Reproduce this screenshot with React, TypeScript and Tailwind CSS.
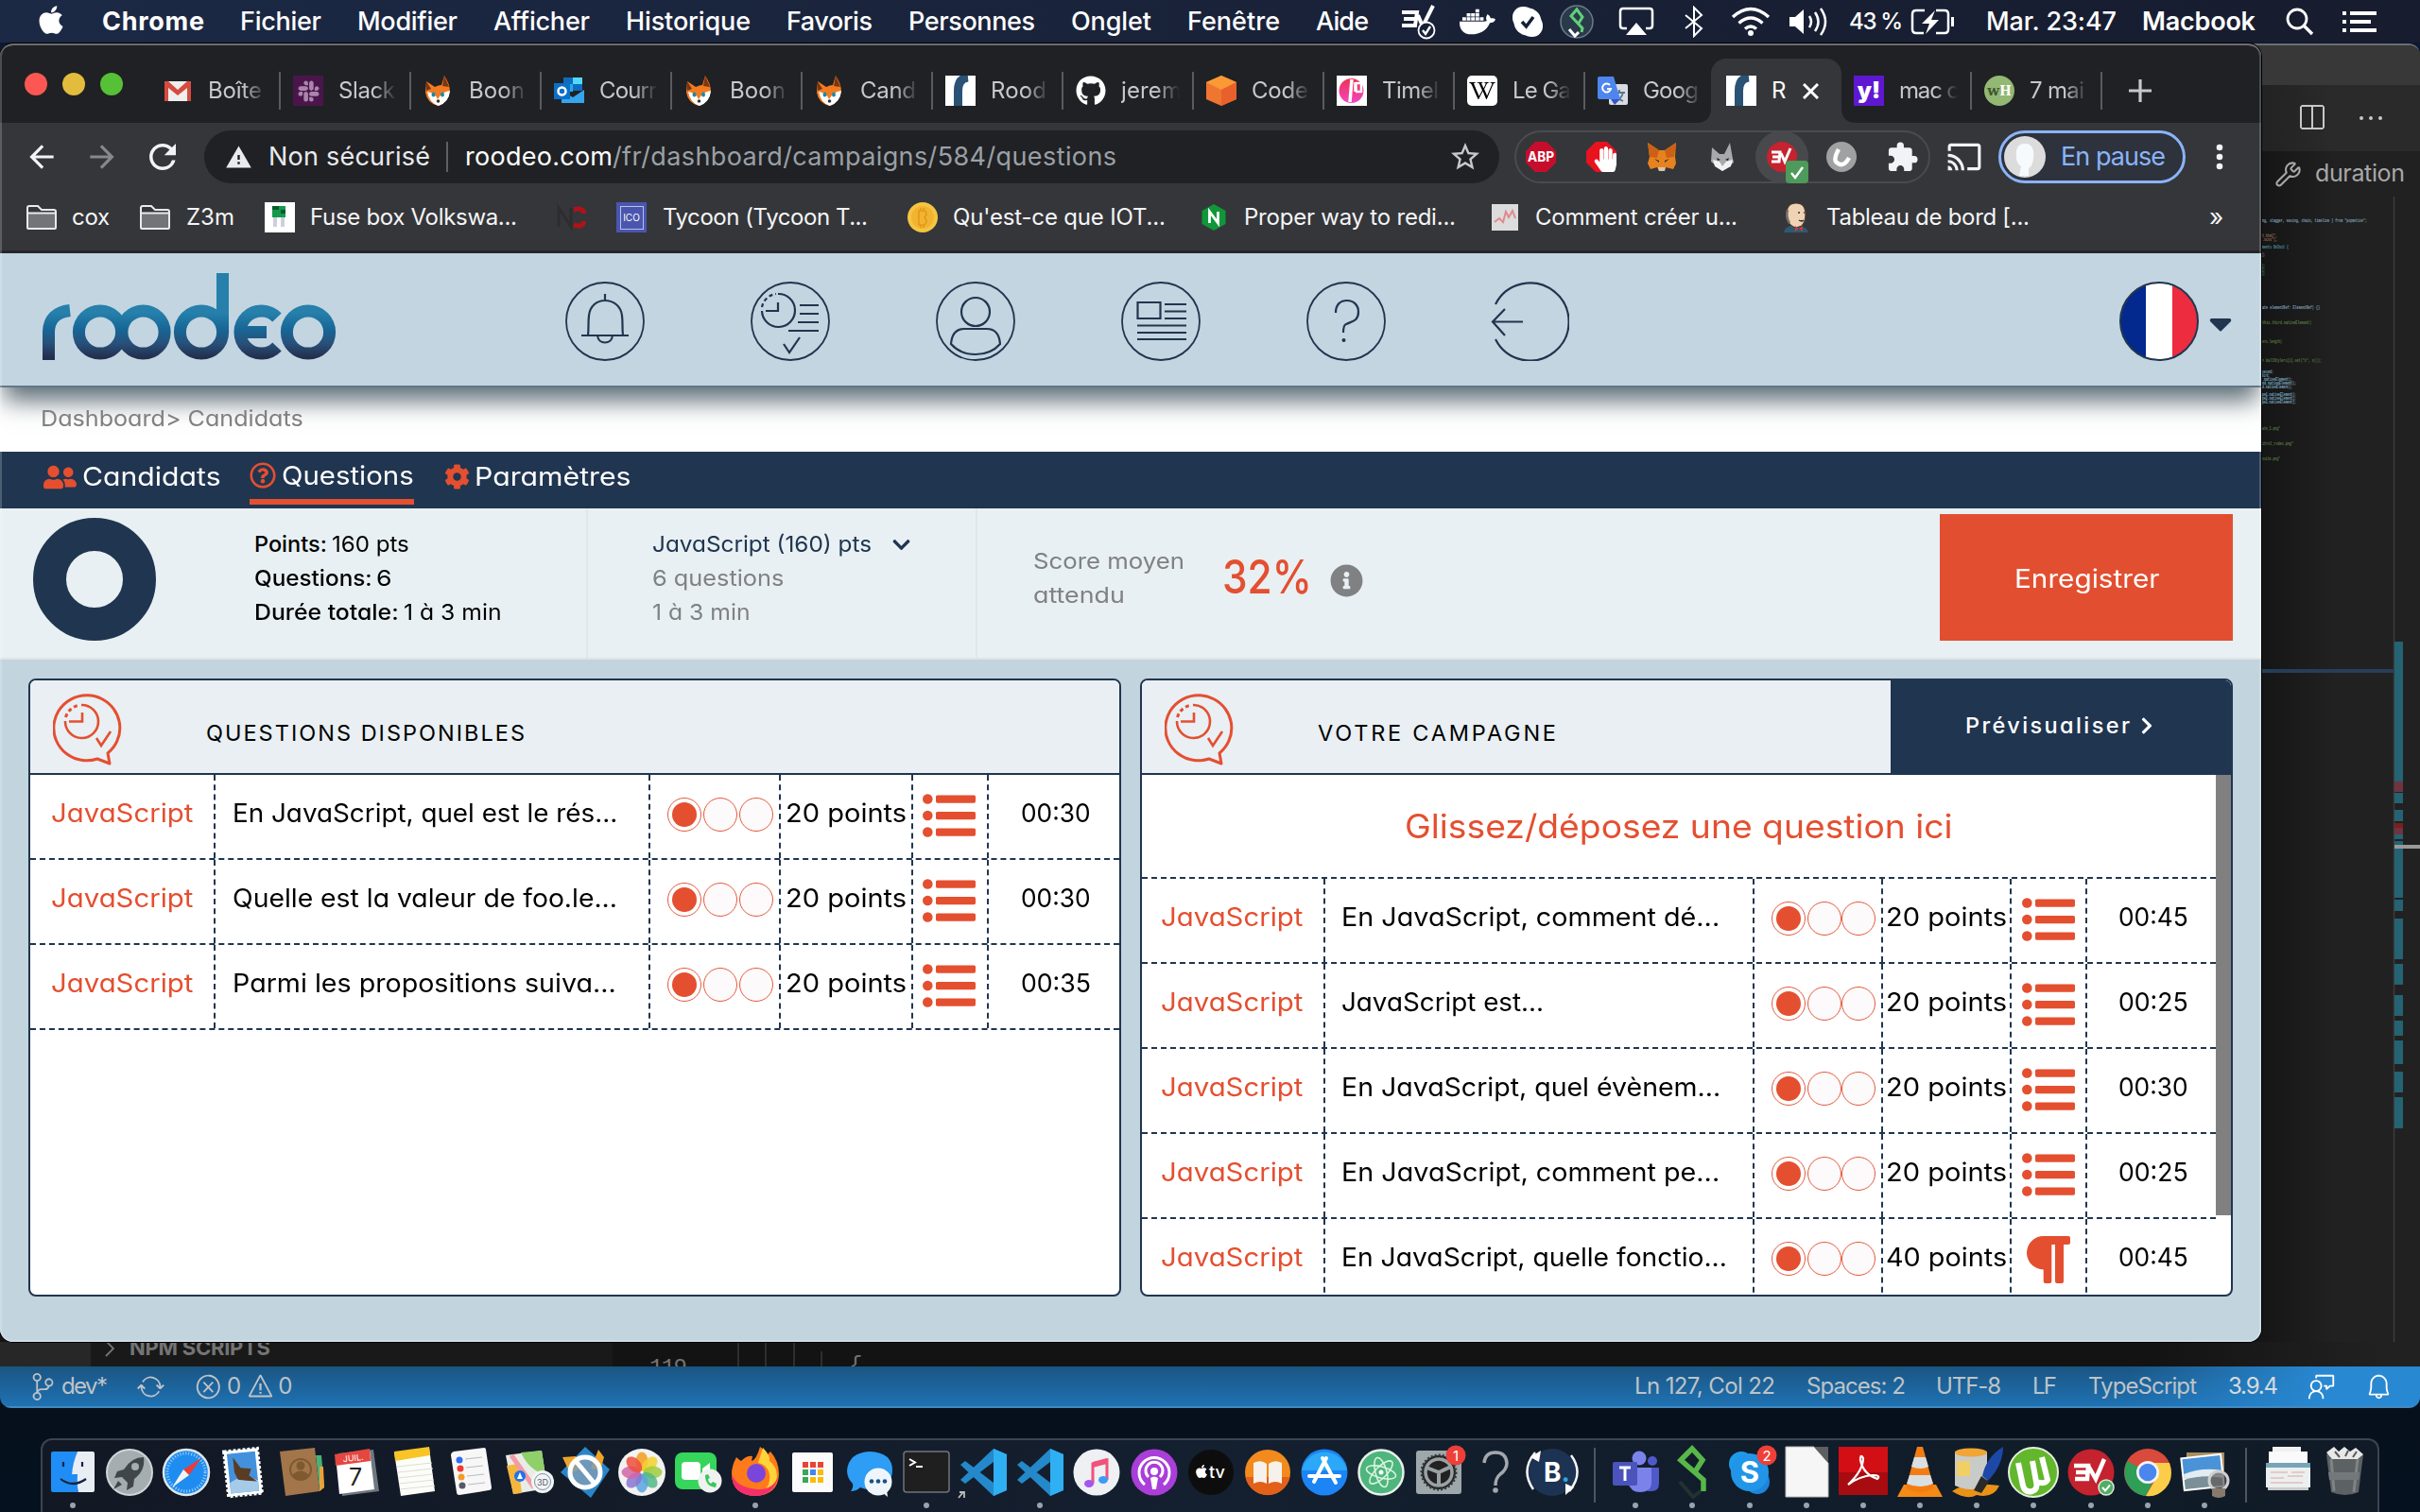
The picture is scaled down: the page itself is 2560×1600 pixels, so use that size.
import React, { useLayoutEffect, useRef } from "react";
import {
  FaApple, FaCog, FaChevronDown, FaChevronRight, FaDocker, FaGithub, FaHandPaper, FaInfoCircle,
  FaPuzzlePiece, FaRegQuestionCircle, FaSlack, FaUserFriends, FaWikipediaW,
} from "react-icons/fa";
import { MdArrowBack, MdArrowForward, MdCast, MdExtension, MdRefresh, MdStarBorder, MdWarning } from "react-icons/md";
import { VscBell, VscError, VscFeedback, VscSourceControl, VscSplitHorizontal, VscSync, VscWarning } from "react-icons/vsc";
import { Wrench } from "lucide-react";

/** Single-line text tracked so that it fills exactly `w` pixels. */
function Fit({ w, className = "", children }: { w: number; className?: string; children: React.ReactNode }) {
  const ref = useRef<HTMLSpanElement>(null);
  useLayoutEffect(() => {
    const el = ref.current;
    if (!el) return;
    el.style.letterSpacing = "0px";
    const n = (el.textContent || "").length;
    const natural = el.getBoundingClientRect().width;
    el.style.letterSpacing = `${(w - natural) / Math.max(1, n - 1)}px`;
  }, [w]);
  return (
    <span className={"block shrink-0 whitespace-pre " + className} style={{ width: w }}>
      <span ref={ref} className="inline-block">{children}</span>
    </span>
  );
}

/** Single-line text whose letters are widened or narrowed to fill exactly `w` pixels. */
function Wide({ w, className = "", children }: { w: number; className?: string; children: React.ReactNode }) {
  const ref = useRef<HTMLSpanElement>(null);
  useLayoutEffect(() => {
    const el = ref.current;
    if (!el) return;
    el.style.transform = `scaleX(${w / el.offsetWidth})`;
  }, [w]);
  return (
    <span className={"block shrink-0 whitespace-pre " + className} style={{ width: w }}>
      <span ref={ref} className="inline-block origin-left">{children}</span>
    </span>
  );
}

/* ---------------------------------------------------------------- menu bar */

const menus: [string, number][] = [
  ["Fichier", 86], ["Modifier", 106], ["Afficher", 102], ["Historique", 132], ["Favoris", 91],
  ["Personnes", 134], ["Onglet", 85], ["Fenêtre", 98], ["Aide", 56],
];

function MenuBar() {
  return (
    <div className="flex h-[45px] items-center bg-gradient-to-r from-[#1b2945] to-[#171c2e] text-[27px] leading-[44px] font-medium text-white">
      <FaApple className="ml-[37px] size-[34px] -translate-y-[2px]" />
      <div className="ml-[37px] flex gap-[38px]">
        <Fit w={108} className="font-bold">Chrome</Fit>
        {menus.map(([t, w]) => <Fit key={t} w={w}>{t}</Fit>)}
      </div>
      <svg className="ml-[34px] h-[38px] w-[38px]" viewBox="0 0 38 38" fill="none" stroke="#fff" strokeWidth="4">
        <path d="M1 9h16l-2 14H1M3 16h12M18 12l5 12L34 2" />
        <circle cx="27" cy="28" r="8.5" fill="#182036" strokeWidth="1.8" />
        <path d="M23 28l3 4 5-8" strokeWidth="2.4" />
      </svg>
      <FaDocker className="ml-[24px] size-[38px]" />
      <svg className="ml-[17px] h-[34px] w-[34px]" viewBox="0 0 34 34">
        <rect x="1" y="1" width="23" height="23" rx="11" fill="#fff" />
        <rect x="10" y="10" width="23" height="23" rx="11" fill="#fff" />
        <circle cx="17" cy="17" r="14.5" fill="#fff" />
        <path d="M11 17l4.500 5 7.500-10" fill="none" stroke="#182036" strokeWidth="3.500" />
      </svg>
      <svg className="ml-[17px] h-[36px] w-[36px]" viewBox="0 0 36 36" fill="none" strokeWidth="3">
        <circle cx="18" cy="18" r="17" fill="#2b3a4a" stroke="#6d7a88" strokeWidth="1.500" />
        <path d="M19 21l5-8-6-8-6 7 12 13-1 4" stroke="#5fd07a" />
        <path d="M10 26l6 7 4-4" stroke="#fff" />
      </svg>
      <svg className="ml-[26px] h-[32px] w-[38px]" viewBox="0 0 38 32" fill="none" stroke="#fff" strokeWidth="2.500">
        <path d="M9 23H5q-3 0-3-3V5q0-3 3-3h28q3 0 3 3v15q0 3-3 3h-4" />
        <path d="M19 17L8 30h22z" fill="#fff" stroke="none" />
      </svg>
      <svg className="ml-[31px] h-[34px] w-[22px]" viewBox="0 0 22 34" fill="none" stroke="#fff" strokeWidth="2">
        <path d="M2 10l17 14-8 8V2l8 8L2 24" />
      </svg>
      <svg className="ml-[28px] h-[32px] w-[42px]" viewBox="0 0 42 32" fill="none" stroke="#fff" strokeWidth="3.400">
        <path d="M2 11q19-17 38 0M8.500 17.500q12.500-11 25 0M15 23.500q6-5 12 0" />
        <circle cx="21" cy="28" r="3" fill="#fff" stroke="none" />
      </svg>
      <svg className="ml-[19px] h-[32px] w-[44px]" viewBox="0 0 44 32" fill="none" stroke="#fff" strokeWidth="2.500">
        <path d="M1 11h6l9-8v26l-9-8H1z" fill="#fff" stroke="none" />
        <path d="M22 10q4 6 0 12M28 6q7 10 0 20M34 2q10 14 0 28" />
      </svg>
      <Fit w={57} className="ml-[20px] text-[24px]">43 %</Fit>
      <svg className="ml-[8px] h-[28px] w-[48px]" viewBox="0 0 48 28" fill="none" stroke="#fff" strokeWidth="2.500">
        <path d="M15 2H6Q2 2 2 6v16q0 4 4 4h8M27 2h9q4 0 4 4v16q0 4-4 4h-9" />
        <path d="M26 2L12 16h8l-4 11 14-15h-8z" fill="#fff" stroke="none" />
        <path d="M44.500 9v10" strokeWidth="3" />
      </svg>
      <Fit w={138} className="ml-[32px]">Mar. 23:47</Fit>
      <Fit w={120} className="ml-[27px] font-semibold">Macbook</Fit>
      <svg className="ml-[32px] h-[30px] w-[30px]" viewBox="0 0 30 30" fill="none" stroke="#fff" strokeWidth="2.800">
        <circle cx="12" cy="12" r="10" /><path d="M19 19l9 9" strokeWidth="3.400" />
      </svg>
      <svg className="ml-[30px] h-[22px] w-[36px]" viewBox="0 0 36 22" fill="#fff">
        <path d="M0 0h4v4H0zM8 0h28v4H8zM0 9h4v4H0zM8 9h22v4H8zM0 18h4v4H0zM8 18h28v4H8z" />
      </svg>
    </div>
  );
}

/* ------------------------------------------------------------ small logos */

function FoxHead() {
  return (
    <svg className="size-8" viewBox="0 0 32 32">
      <path d="M3 6l9 6q4-2 7-2l3-10q6 9 6 17-2 12-13 15Q4 29 2 18z" fill="#f27b21" />
      <path d="M22 0l5 12-7-1zM3 6l5 8-5 2z" fill="#7a3514" />
      <path d="M4 17q8 1 11 8 4-8 13-9-1 12-12 16Q6 29 4 17z" fill="#fff" />
      <ellipse cx="10.500" cy="20" rx="2" ry="2.600" fill="#1e88a8" /><ellipse cx="20" cy="20" rx="2" ry="2.600" fill="#1e88a8" />
      <circle cx="15.500" cy="27" r="1.800" fill="#333" />
    </svg>
  );
}
const RoodeoMark = () => (
  <svg className="size-8" viewBox="0 0 32 32"><rect width="32" height="32" fill="#fff" /><path d="M13.500 32V16Q13.500 3 24 2" fill="none" stroke="#2a5275" strokeWidth="9" /></svg>
);
const Gmail = () => (
  <svg className="size-8" viewBox="0 0 32 32"><rect x="2" y="6" width="28" height="21" rx="2" fill="#eee" /><path d="M2 27V8q1-3 4-2l10 9 10-9q3-1 4 2v19h-4V13l-10 8L6 13v14z" fill="#d54b3d" /></svg>
);
const Outlook = () => (
  <svg className="size-8" viewBox="0 0 32 32"><path d="M10 2h20v14H10z" fill="#0f6cbd" /><path d="M20 2h10v7H20z" fill="#50d9ff" /><path d="M10 9h10v8H10z" fill="#28a8ea" /><path d="M8 29V16l12 7 12-8v14z" fill="#35a5ee" /><path d="M0 8h17v17H0z" fill="#0a6fc9" /><circle cx="8.500" cy="16.500" r="4" fill="none" stroke="#fff" strokeWidth="2.500" /></svg>
);
const CodeBox = () => (
  <svg className="size-8" viewBox="0 0 32 32"><path d="M16 0l16 7v18l-16 7-16-7V7z" fill="#ee7631" /><path d="M16 0l16 7-16 8L0 7z" fill="#fb9a35" /><path d="M16 15l16-8v18l-16 7z" fill="#e8612c" /></svg>
);
const TimeMark = () => (
  <svg className="size-8" viewBox="0 0 32 32"><rect width="32" height="32" fill="#fff" /><linearGradient id="tm" x1="0" y1="0" x2="0" y2="1"><stop stopColor="#ee3350" /><stop offset="1" stopColor="#f246c4" /></linearGradient><circle cx="15.500" cy="16" r="13" fill="url(#tm)" /><path d="M16 4l-2 24M20 7v10" fill="none" stroke="#fff" strokeWidth="3.500" /><path d="M20 8h6v9h-6" fill="none" stroke="#fff" strokeWidth="2.500" /></svg>
);
const Tile = ({ className, children }: { className: string; children?: React.ReactNode }) => (
  <span className={"flex size-8 shrink-0 items-center justify-center overflow-hidden " + className}>{children}</span>
);
const Translate = () => (
  <svg className="size-8" viewBox="0 0 32 32"><rect x="12" y="9" width="20" height="22" rx="2" fill="#d9dde2" /><path d="M18 18h11M23 15v3m4 0q-2 7-8 9m1-6q2 4 7 6" fill="none" stroke="#56768f" strokeWidth="1.800" /><path d="M2 1h15l7 24H2q-2 0-2-2V3q0-2 2-2z" fill="#4d86ee" /><path d="M14 25h10l-6 6z" fill="#3456c8" /><path d="M13 10a4.500 4.500 0 1 0 1 4h-4" fill="none" stroke="#fff" strokeWidth="2" /></svg>
);

type Tab = { icon: React.ReactNode; label: string; w: number };
const tabs: Tab[] = [
  { icon: <Gmail />, label: "Boîte", w: 57 },
  { icon: <Tile className="bg-[#4a154b]"><FaSlack className="size-[25px] text-[#a984ab]" /></Tile>, label: "Slack", w: 60 },
  { icon: <FoxHead />, label: "Boon", w: 59 },
  { icon: <Outlook />, label: "Courr", w: 61 },
  { icon: <FoxHead />, label: "Boon", w: 59 },
  { icon: <FoxHead />, label: "Cand", w: 59 },
  { icon: <RoodeoMark />, label: "Rood", w: 59 },
  { icon: <FaGithub className="size-8 text-white" />, label: "jerem", w: 64 },
  { icon: <CodeBox />, label: "Code", w: 60 },
  { icon: <TimeMark />, label: "Timel", w: 60 },
  { icon: <Tile className="rounded-[5px] bg-white"><FaWikipediaW className="size-[28px] text-black" /></Tile>, label: "Le Ga", w: 62 },
  { icon: <Translate />, label: "Goog", w: 59 },
];

function TabCell({ tab, sep = true }: { tab: Tab; sep?: boolean }) {
  return (
    <div className={"flex h-[40px] w-[138px] shrink-0 items-center border-r-2 pl-[13px] " + (sep ? "border-[#5a5b5f]" : "border-transparent")}>
      {tab.icon}
      <div className="ml-[16px] w-[62px] shrink-0 overflow-hidden [mask-image:linear-gradient(90deg,#000_60%,transparent)]">
        <Fit w={tab.w} className="text-[24px] leading-8 text-[#c5c8cc]">{tab.label}</Fit>
      </div>
    </div>
  );
}

function TabStrip() {
  return (
    <div className="flex h-[82px] items-end bg-[#202124]">
      <div className="flex h-[82px] w-[159px] items-center gap-4 pl-[26px]">
        <span className="size-6 rounded-full bg-[#fc5753]" />
        <span className="size-6 rounded-full bg-[#e3bc3d]" />
        <span className="size-6 rounded-full bg-[#56c037]" />
      </div>
      <div className="flex h-[68px] items-center">
        {tabs.map((t, i) => <TabCell key={i} tab={t} sep={i < 11} />)}
      </div>
      <div className="relative -ml-[5px] flex h-[68px] w-[138px] items-center rounded-t-[16px] bg-[#35363a] pl-[16px]">
        <svg className="absolute bottom-0 -left-4 size-4" viewBox="0 0 16 16" fill="#35363a"><path d="M16 0v16H0Q16 16 16 0z" /></svg>
        <svg className="absolute -right-4 bottom-0 size-4" viewBox="0 0 16 16" fill="#35363a"><path d="M0 0v16h16Q0 16 0 0z" /></svg>
        <RoodeoMark />
        <span className="ml-[16px] w-[16px] overflow-hidden text-[24px] leading-8 text-white">R</span>
        <svg className="ml-[17px] size-[17px]" viewBox="0 0 17 17" stroke="#fff" strokeWidth="3"><path d="M1 1l15 15M16 1L1 16" /></svg>
      </div>
      <div className="flex h-[68px] items-center">
        <TabCell tab={{ icon: <Tile className="bg-[#5f18d1] text-[24px] font-black text-white">y!</Tile>, label: "mac c", w: 64 }} />
        <TabCell tab={{ icon: <Tile className="rounded-full bg-[#93b874] font-serif text-[17px] font-bold text-white"><span className="text-[#40542f]">w</span>H</Tile>, label: "7 mai", w: 58 }} />
        <svg className="ml-[28px] size-6" viewBox="0 0 24 24" stroke="#c5c8cc" strokeWidth="3.200"><path d="M12 0v24M0 12h24" /></svg>
      </div>
    </div>
  );
}

function Toolbar() {
  return (
    <div className="flex h-[72px] items-center bg-[#35363a] text-[27px]">
      <MdArrowBack className="ml-[25px] size-[38px] text-[#f1f3f4]" />
      <MdArrowForward className="ml-[26px] size-[38px] text-[#86888b]" />
      <MdRefresh className="ml-[24px] size-[42px] text-[#f1f3f4]" />
      <div className="ml-[23px] flex h-[56px] w-[1370px] items-center rounded-full bg-[#202124]">
        <MdWarning className="ml-[22px] size-[29px] text-[#e8eaed]" />
        <Fit w={171} className="ml-[17px] text-[#e8eaed]">Non sécurisé</Fit>
        <span className="ml-[17px] h-8 w-[2px] bg-[#5f6064]" />
        <Fit w={156} className="ml-[18px] text-white">roodeo.com</Fit>
        <Fit w={533} className="text-[#9aa0a6]">/fr/dashboard/campaigns/584/questions</Fit>
        <MdStarBorder className="ml-[351px] size-[36px] text-[#c5c8cc]" />
      </div>
      <div className="ml-[16px] flex h-[56px] w-[440px] items-center rounded-full border-2 border-[#4a4b50]">
        <svg className="ml-[10px] size-8" viewBox="0 0 32 32"><path d="M10 0h12l10 10v12L22 32H10L0 22V10z" fill="#c70d2c" /><text x="16" y="21" textAnchor="middle" textLength="28" lengthAdjust="spacingAndGlyphs" className="fill-white text-[14px] font-bold">ABP</text></svg>
        <Tile className="ml-8"><svg className="size-8" viewBox="0 0 32 32"><path d="M10 0h12l10 10v12L22 32H10L0 22V10z" fill="#e8131f" /><FaHandPaper x="7" y="5" width="18" height="21" color="#fff" /></svg></Tile>
        <svg className="ml-8 size-8" viewBox="0 0 32 32"><path d="M1 1l12 8h6l12-8-1 15 1 7-3 6-8-2-2 4h-5l-2-4-7 2-3-6 2-7z" fill="#e8821e" /><path d="M1 1l12 8-2 8-8-1zM31 1l-12 8 2 8 8-1z" fill="#cb6016" /><path d="M8 18l5 2v2zM24 18l-5 2v2z" fill="#22303a" /><path d="M12 27h8l-1 4h-6z" fill="#d8c4b0" /></svg>
        <svg className="ml-8 size-8" viewBox="0 0 32 32"><path d="M5 6l8 7h5l6-12 3 17 1 4-12 9L4 21z" fill="#a7a9ac" /><path d="M6 19l7 2 3 5 4-5 7-2-2 7-9 5-8-5z" fill="#f2f2f2" /><path d="M10 17l4 2-3 1zM23 17l-4 2 3 1z" fill="#222" /></svg>
        <div className="relative ml-[19px] flex size-[56px] items-center justify-center rounded-full bg-[#48494d]">
          <Tile className="rounded-full bg-[#c4232f]"><svg viewBox="0 0 32 32" className="size-8" fill="none" stroke="#fff" strokeWidth="3"><path d="M5 11h9l-1 10H5M6 16h7M15 12l4 9 6-14" /></svg></Tile>
          <span className="absolute right-0 bottom-0 flex size-6 items-center justify-center rounded-[4px] bg-[#4d9a5a]"><svg viewBox="0 0 24 24" className="size-6" fill="none" stroke="#fff" strokeWidth="2.500"><path d="M6 13l4 5 8-11" /></svg></span>
        </div>
        <svg className="ml-[19px] size-8" viewBox="0 0 32 32"><circle cx="16" cy="16" r="16" fill="#a0a1a3" /><path d="M13 8q-6 11-2 14 7 6 13-5" fill="none" stroke="#fff" strokeWidth="4.500" /></svg>
        <MdExtension className="ml-[31px] size-[35px] text-[#f1f3f4]" />
      </div>
      <MdCast className="ml-[17px] size-[38px] text-[#f1f3f4]" />
      <div className="ml-[17px] flex h-[56px] w-[198px] items-center rounded-full border-[3px] border-[#8ab4f8] bg-[#2d323d]">
        <svg className="ml-[3px] size-[44px]" viewBox="0 0 44 44"><circle cx="22" cy="22" r="22" fill="#dcdcdc" /><path d="M13 24q-2-16 9-16t9 16q-1 8-5 10v8h-10l2-10q-4-2-5-8z" fill="#f6fafc" /></svg>
        <Fit w={111} className="ml-[16px] text-[#8ab4f8]">En pause</Fit>
      </div>
      <svg className="ml-[32px] h-[28px] w-[8px]" viewBox="0 0 8 28" fill="#f1f3f4"><circle cx="4" cy="4" r="3.300" /><circle cx="4" cy="14" r="3.300" /><circle cx="4" cy="24" r="3.300" /></svg>
    </div>
  );
}

const Folder = () => (
  <svg className="h-[26px] w-8" viewBox="0 0 32 26"><path d="M1 24V3q0-2 2-2h9l4 4h13q2 0 2 2v17q0 1-1 1H2q-1 0-1-1z" fill="#35363a" stroke="#e8eaed" strokeWidth="2" /><path d="M2 9h28v15H2z" fill="#737477" /><path d="M1 8.500h30" stroke="#e8eaed" strokeWidth="2" /></svg>
);

function Bookmarks() {
  return (
    <div className="flex h-[66px] items-center border-b-[3px] border-[#26272a] bg-[#35363a] pb-[7px] text-[24px] leading-8 text-[#f4f5f6]">
      <span className="ml-[28px]"><Folder /></span>
      <Fit w={40} className="ml-[16px]">cox</Fit>
      <span className="ml-[32px]"><Folder /></span>
      <Fit w={51} className="ml-[17px]">Z3m</Fit>
      <svg className="ml-[32px] size-8" viewBox="0 0 32 32"><rect width="32" height="32" fill="#fff" /><path d="M8 4h14v12H8z" fill="#159a4c" /><path d="M8 4h7v4H8zM17 8h5v4h-5z" fill="#0b5a2c" /><path d="M9 16h4v10H9zM17 16h4v10h-4z" fill="#cfcfdb" /></svg>
      <Fit w={219} className="ml-[16px]">Fuse box Volkswa...</Fit>
      <svg className="ml-[41px] size-8" viewBox="0 0 32 32" fill="none" strokeWidth="5"><path d="M3 26V6l13 20V6" stroke="#2d2c2e" strokeWidth="3" /><path d="M19 8q10-3 11 4M19 24q10 3 11-4" stroke="#b01218" /></svg>
      <Tile className="ml-[32px] bg-[#4a56ae]"><span className="flex size-[25px] items-center justify-center border border-[#b8c0e8] text-[10px] text-white">ICO</span></Tile>
      <Fit w={217} className="ml-[17px]">Tycoon (Tycoon T...</Fit>
      <svg className="ml-[42px] size-8" viewBox="0 0 32 32"><circle cx="16" cy="16" r="16" fill="#f5c542" /><circle cx="16" cy="16" r="12" fill="#f2b430" /><path d="M12 9h6q4 3 0 7 4 4 0 8h-6zM14 9V6m3 3V6m-3 18v3m3-3v3" fill="none" stroke="#e19a1c" strokeWidth="1.600" /></svg>
      <Fit w={225} className="ml-[16px]">Qu'est-ce que IOT...</Fit>
      <svg className="ml-[38px] h-[28px] w-[26px]" viewBox="0 0 26 28"><path d="M13 0l12.500 7v14L13 28 .5 21V7z" fill="#119639" /><path d="M8.500 20V8l9 12V8" fill="none" stroke="#fff" strokeWidth="2.800" /></svg>
      <Fit w={224} className="ml-[19px]">Proper way to redi...</Fit>
      <svg className="ml-[38px] size-7" viewBox="0 0 28 28"><rect width="28" height="28" fill="#dcdcdc" /><path d="M3 19l5-4 4 4 3-11 3 6 4-7 3 8" fill="none" stroke="#e0898c" strokeWidth="2" /></svg>
      <Fit w={214} className="ml-[18px]">Comment créer u...</Fit>
      <svg className="ml-[47px] size-8" viewBox="0 0 32 32"><path d="M2 32q1-6 8-7h10q7 2 8 7z" fill="#2c5a75" /><path d="M5 12Q5 1 15 1t10 12q0 8-4 12l-6 2q-8-2-9-9z" fill="#efd3b5" stroke="#4b3a30" strokeWidth="1.200" /><path d="M6 8q-2 8 2 14" stroke="#7c6f68" strokeWidth="2.500" fill="none" /><path d="M17 11h2m4 0h1m-6 8q3 2 5 0" stroke="#333" strokeWidth="1.500" /><path d="M14 25l4 3-4 3zM22 25l-4 3 4 3z" fill="#d33833" /></svg>
      <Fit w={215} className="ml-[15px]">Tableau de bord [...</Fit>
      <span className="ml-[190px] text-[26px]">»</span>
    </div>
  );
}

/* ------------------------------------------------------------------- page */

function RoodeoLogo() {
  return (
    <svg role="img" aria-label="roodeo" className="ml-[42px] h-[96px] w-[316px]" viewBox="42 286 316 96" fill="none" stroke="url(#brand)" strokeWidth="13">
      <defs>
        <linearGradient id="brand" gradientUnits="userSpaceOnUse" x1="0" y1="321" x2="0" y2="380">
          <stop offset="0.150" stopColor="#2680ab" /><stop offset="0.450" stopColor="#176696" /><stop offset="0.700" stopColor="#28507a" /><stop offset="0.950" stopColor="#22304f" />
        </linearGradient>
      </defs>
      <path d="M51.500 380V350Q52 330 74 327.500" />
      <circle cx="106" cy="350.500" r="22.600" /><circle cx="151.500" cy="350.500" r="22.600" />
      <circle cx="213" cy="350.500" r="22.600" /><path d="M229 288h13v62h-13z" fill="url(#brand)" stroke="none" />
      <path d="M293 335A22.600 22.600 0 1 0 293 366M258 350.500h24" />
      <circle cx="326" cy="350.500" r="22.600" />
    </svg>
  );
}

const HeaderIcon = ({ ring = true, children }: { ring?: boolean; children: React.ReactNode }) => (
  <svg className="size-[84px] shrink-0" viewBox="0 0 84 84" fill="none" stroke="#20354f" strokeWidth="2.200">
    {ring && <circle cx="42" cy="42" r="41" strokeWidth="1.800" />}
    {children}
  </svg>
);

function SiteHeader() {
  return (
    <div className="relative z-10 flex h-[142px] items-center border-b-2 border-[#637787] bg-[#c3d5e0] shadow-[0_18px_24px_-4px_rgba(40,62,74,0.75)]">
      <div className="-mt-[6px] flex w-[598px]"><RoodeoLogo /></div>
      <div className="mt-[4px] flex gap-[112px]">
        <HeaderIcon><path d="M42 13v8M17 57h50M24 57C25 48 24 44 25 36 26 26 33 20 42 20s17 6 18 16c1 8 0 12 1 21M34 57c1 10 15 10 16 0" /></HeaderIcon>
        <HeaderIcon><path d="M29 13a17.500 17.500 0 1 1-17 18" /><path d="M12 27a17.500 17.500 0 0 1 15-14" strokeDasharray="4 3" /><path d="M29 22v9H16M52 25h20M52 34h20M50 43h22M40 52h32M35 66l6 9 11-16" /></HeaderIcon>
        <HeaderIcon><circle cx="42" cy="32" r="15" /><path d="M16 66C17 54 22 50 30 50h24c8 0 13 4 14 16-8 9-17 11-26 11s-18-2-26-11z" /></HeaderIcon>
        <HeaderIcon><path d="M17.500 22h24v17h-24zM46 24h23M46 31.500h23M46 39h23M17 46.500h52M17 54h52M17 61h52" /></HeaderIcon>
        <HeaderIcon><path d="M31 33c0-9 5-13 12-13s12 5 12 12c0 10-7 10-13 13q-3 1-3 9" /><circle cx="39.500" cy="62" r="2" fill="#20354f" stroke="none" /></HeaderIcon>
        <div className="-ml-[2px]"><HeaderIcon ring={false}><path d="M6 24A41 41 0 1 1 6 61" /><path d="M35 42.500H3M16 29L3 42.500 16 57" /></HeaderIcon></div>
      </div>
      <svg className="mt-[4px] ml-[582px] size-[84px]" viewBox="0 0 84 84">
        <clipPath id="disc"><circle cx="42" cy="42" r="40.500" /></clipPath>
        <g clipPath="url(#disc)"><path d="M0 0h28v84H0z" fill="#03288e" /><path d="M28 0h28v84H28z" fill="#fff" /><path d="M56 0h28v84H56z" fill="#ed2c40" /></g>
        <circle cx="42" cy="42" r="41" fill="none" stroke="#20354f" strokeWidth="2" />
      </svg>
      <svg className="mt-[12px] ml-[11px] h-[14px] w-6" viewBox="0 0 24 14"><path d="M2 0h20q2 1 1 3L13 13q-1 1-2 0L1 3Q0 1 2 0z" fill="#20354f" /></svg>
    </div>
  );
}

function SiteNav() {
  return (
    <div className="flex h-[60px] items-start bg-[#203550] pl-[46px] text-[27.500px] leading-[53px] text-white">
      <div className="flex items-center"><FaUserFriends className="h-[36px] w-[35px] text-[#e44f30]" /><Wide w={147} className="ml-[6px]">Candidats</Wide></div>
      <div className="ml-[30px] flex h-[56px] items-center border-b-[6px] border-[#e44f30]"><FaRegQuestionCircle className="size-[28px] text-[#e44f30]" /><Wide w={140} className="ml-[6px]">Questions</Wide></div>
      <div className="ml-[32px] flex items-center"><FaCog className="size-[27px] text-[#e44f30]" /><Wide w={166} className="ml-[5px]">Paramètres</Wide></div>
    </div>
  );
}

function Summary() {
  return (
    <div className="flex h-[160px] border-b-2 border-[#e2e3e4] bg-[#e8f0f3] text-[23.500px] leading-9">
      <div className="flex w-[622px] border-r-2 border-[#e2e6e8]">
        <svg className="mt-[10px] ml-[35px] size-[130px]" viewBox="0 0 130 130"><circle cx="65" cy="65" r="47.500" fill="none" stroke="#203550" strokeWidth="35" /></svg>
        <div className="mt-[20px] ml-[104px] text-black">
          <div className="flex"><Wide w={77} className="font-medium">Points:</Wide><Wide w={82} className="ml-[5px]">160 pts</Wide></div>
          <div className="flex"><Wide w={125} className="font-medium">Questions:</Wide><Wide w={17} className="ml-[4px]">6</Wide></div>
          <div className="flex"><Wide w={153} className="font-medium">Durée totale:</Wide><Wide w={103} className="ml-[5px]">1 à 3 min</Wide></div>
        </div>
      </div>
      <div className="w-[412px] border-r-2 border-[#e2e6e8] pt-[20px] pl-[68px] text-[#808183]">
        <div className="flex items-center text-[#203550]"><Wide w={232}>JavaScript (160) pts</Wide><FaChevronDown className="ml-[21px] size-[21px]" /></div>
        <Wide w={139}>6 questions</Wide>
        <Wide w={103}>1 à 3 min</Wide>
      </div>
      <div className="flex w-[1018px] pl-[59px]">
        <div className="mt-[38px] text-[#808183]"><Wide w={160}>Score moyen</Wide><Wide w={97}>attendu</Wide></div>
        <Wide w={95} className="mt-[46px] ml-[40px] text-[50px] leading-[52px] font-medium text-[#e44f30]">32%</Wide>
        <FaInfoCircle className="mt-[59px] ml-[19px] size-[35px] text-[#808183]" />
      </div>
      <div className="mt-[6px] flex h-[134px] w-[310px] items-center justify-center bg-[#e24f30] pt-[3px] text-[27px] text-white"><Wide w={153}>Enregistrer</Wide></div>
    </div>
  );
}

const ClockBubble = () => (
  <svg className="h-[77px] w-[74px]" viewBox="0 0 74 77" fill="none" stroke="#e44f30" strokeWidth="3">
    <path d="M58 63A35 34.500 0 1 0 47 69L60 74z" strokeLinejoin="round" />
    <path d="M30 12a17.500 17.500 0 1 1-17 17" strokeWidth="2.600" />
    <path d="M13.500 25A17.500 17.500 0 0 1 27 12.500" strokeDasharray="4 3" />
    <path d="M31 20v9.500H17M46 47l5 8 10-15" strokeWidth="2.600" />
  </svg>
);

const ListMark = () => (
  <svg className="h-[46px] w-[56px]" viewBox="0 0 56 46" fill="#e44f30">
    <circle cx="5.300" cy="5.500" r="5.300" /><circle cx="5.300" cy="23" r="5.300" /><circle cx="5.300" cy="40.500" r="5.300" />
    <rect x="14" y="1.500" width="42" height="8.200" rx="1.600" /><rect x="14" y="19" width="42" height="8.200" rx="1.600" /><rect x="14" y="36.500" width="42" height="8.200" rx="1.600" />
  </svg>
);

const Pilcrow = () => (
  <svg className="h-[50px] w-[46px]" viewBox="0 0 46 50" fill="#e44f30">
    <path d="M17.700 0H44q2 0 2 2v5q0 2-2 2h-5v39q0 2-2 2h-5q-2 0-2-2V9h-3.700v39q0 2-2 2h-4.600q-2 0-2-2V35.400A17.700 17.700 0 0 1 17.700 0z" />
  </svg>
);

type Question = { text: string; w: number; points: string; time: string; code?: boolean };
const available: Question[] = [
  { text: "En JavaScript, quel est le rés...", w: 407, points: "20 points", time: "00:30" },
  { text: "Quelle est la valeur de foo.le...", w: 407, points: "20 points", time: "00:30" },
  { text: "Parmi les propositions suiva...", w: 406, points: "20 points", time: "00:35" },
];
const campaign: Question[] = [
  { text: "En JavaScript, comment dé...", w: 400, points: "20 points", time: "00:45" },
  { text: "JavaScript est...", w: 214, points: "20 points", time: "00:25" },
  { text: "En JavaScript, quel évènem...", w: 401, points: "20 points", time: "00:30" },
  { text: "En JavaScript, comment pe...", w: 400, points: "20 points", time: "00:25" },
  { text: "En JavaScript, quelle fonctio...", w: 408, points: "40 points", time: "00:45", code: true },
];

const cell = "flex items-center border-r-2 border-dashed border-[#203550]";

function Row({ q, wide }: { q: Question; wide: boolean }) {
  return (
    <div className={"grid h-[90px] shrink-0 border-b-2 border-dashed border-[#203550] text-[27px] leading-9 text-black " +
      (wide ? "grid-cols-[196px_460px_138px_140px_80px_138px]" : "grid-cols-[194px_454px_136px_136px_80px_136px]")}>
      <div className={cell + (wide ? " pl-[22px]" : " pl-[20px]")}><Wide w={150} className="-mt-[6px] text-[#e44f30]">JavaScript</Wide></div>
      <div className={cell + (wide ? " pl-[18px]" : " pl-[17px]")}><Wide w={q.w} className="-mt-[6px]">{q.text}</Wide></div>
      <div className={cell + " pl-[18px]"}>
        <span className="-mt-[4px] flex size-[36px] shrink-0 items-center justify-center rounded-full border-[1.500px] border-[#e4593c] bg-white"><span className="size-[26px] rounded-full bg-[#e44f30]" /></span>
        <span className="-mt-[4px] ml-[2px] size-[36px] shrink-0 rounded-full border-[1.500px] border-[#e4593c] bg-[#fdfafb]" />
        <span className={"-mt-[4px] size-[36px] shrink-0 rounded-full border-[1.500px] border-[#e4593c] bg-[#fdfafb] " + (wide ? "ml-[2px]" : "ml-0")} />
      </div>
      <div className={cell + (wide ? " pl-[5px]" : " pl-[3px]")}><Wide w={128} className="-mt-[6px]">{q.points}</Wide></div>
      <div className={cell + (wide ? " pl-[10px]" : q.code ? " pl-[16px]" : " pl-[11px]")}>
        <span className="-mt-[3px]">{q.code ? <Pilcrow /> : <ListMark />}</span>
      </div>
      <div className="flex items-center justify-center pl-[4px]"><Wide w={74} className="-mt-[6px]">{q.time}</Wide></div>
    </div>
  );
}

function Panels() {
  return (
    <div className="flex h-[722px] gap-5 bg-[#c2d4de] px-[30px] pt-[20px]">
      <section className="flex h-[654px] w-[1156px] flex-col overflow-hidden rounded-[8px] border-2 border-[#203550] bg-white">
        <header className="flex h-[100px] shrink-0 items-start border-b-2 border-[#203550] bg-[#e9eff3] pt-[14px] pl-[24px] text-[23.500px] text-black">
          <ClockBubble /><Fit w={337} className="mt-[24px] ml-[88px] leading-[36px]">QUESTIONS DISPONIBLES</Fit>
        </header>
        {available.map((q) => <Row key={q.text} q={q} wide />)}
      </section>
      <section className="flex h-[654px] w-[1156px] flex-col overflow-hidden rounded-[8px] border-2 border-[#203550] bg-white">
        <header className="flex h-[100px] shrink-0 border-b-2 border-[#203550] bg-[#e9eff3] text-[23.500px] text-black">
          <div className="flex w-[792px] items-start pt-[14px] pl-[24px]"><ClockBubble /><Fit w={252} className="mt-[24px] ml-[88px] leading-[36px]">VOTRE CAMPAGNE</Fit></div>
          <div className="flex h-[98px] grow items-center bg-[#203550] pb-[3px] pl-[79px] font-medium text-white"><Fit w={174}>Prévisualiser</Fit><FaChevronRight className="ml-[8px] size-[20px]" /></div>
        </header>
        <div className="flex min-h-0 grow overflow-hidden">
          <div className="w-[1136px]">
            <div className="flex h-[110px] items-center justify-center border-b-2 border-dashed border-[#203550] text-[35px] text-[#e44f30]"><Wide w={580}>Glissez/déposez une question ici</Wide></div>
            {campaign.map((q) => <Row key={q.text} q={q} wide={false} />)}
          </div>
          <div className="h-[466px] w-4 bg-[#808080]" />
        </div>
      </section>
    </div>
  );
}

function ChromeWindow() {
  return (
    <div className="absolute top-[46px] left-0 h-[1374px] w-[2392px] overflow-hidden rounded-[14px] border-t-2 border-[#6c6d70] bg-[#c2d4de] shadow-[0_0_0_1px_#000]">
      <TabStrip />
      <Toolbar />
      <Bookmarks />
      <div className="[font-feature-settings:'cv11']">
        <SiteHeader />
        <div className="flex h-[68px] items-center bg-white pb-[3px] pl-[43px] text-[23.500px] text-[#808080]"><Wide w={278} className="relative z-20">Dashboard&gt; Candidats</Wide></div>
        <SiteNav />
        <Summary />
        <Panels />
      </div>
      <div className="pointer-events-none absolute inset-0 z-30 rounded-[12px] border-x-2 border-b-2 border-white/20" />
    </div>
  );
}

/* ----------------------------------------------------------------- editor */

const ruler: [number, number, string][] = [
  [679, 827, "#236373"], [827, 838, "#6f3440"], [839, 850, "#236373"], [857, 869, "#236373"], [871, 876, "#7c1d20"],
  [876, 883, "#6f3440"], [883, 888, "#236373"], [890, 950, "#236373"], [952, 964, "#236373"], [972, 1015, "#236373"],
  [1020, 1042, "#236373"], [1053, 1075, "#236373"], [1080, 1096, "#236373"], [1101, 1126, "#236373"], [1134, 1156, "#236373"], [1161, 1194, "#236373"],
];
const minimap: [number, string, number, string][] = [
  [235, 'ng, stagger, easing, chain, timeline } from "popmotion";', 111, "#7fa3b8"],
  [251, 't.html",', 16, "#9a6b55"], [255, '.scss"],', 16, "#9a6b55"], [263, "ments OnInit {", 28, "#4e94a8"], [271, "};", 3, "#999"],
  [283, "};", 3, "#4e9a88"], [287, "};", 3, "#4e9a88"], [291, "};", 3, "#4e9a88"],
  [327, "ate elementRef: ElementRef) {}", 61, "#7fa3b8"], [343, "this.third.nativeElement)", 52, "#5a7a42"], [363, "ers.length)", 21, "#5a7a42"],
  [383, '> ballStylers[i].set("x", x)));', 63, "#5a7a42"], [395, "second;", 12, "#7fb0c8"], [399, "hird;", 8, "#7fb0c8"],
  [403, ".nativeElement);", 32, "#7fb0c8"], [407, "nd.nativeElement);", 36, "#7fb0c8"], [411, "d.nativeElement);", 32, "#7fb0c8"],
  [419, "pe1.nativeElement);", 36, "#7fb0c8"], [423, "pe2.nativeElement);", 36, "#7fb0c8"], [427, "pe3.nativeElement);", 36, "#7fb0c8"],
  [455, 'ate_3.png"', 19, "#5a7a42"], [471, 'itrol_rodeo.png"', 33, "#5a7a42"], [487, 'osite.png"', 19, "#5a7a42"],
];

function EditorWindow() {
  return (
    <div className="absolute top-[46px] left-0 flex h-[1444px] w-[2560px] flex-col overflow-hidden rounded-[12px] border-t-2 border-[#6c6d70] bg-[linear-gradient(90deg,#151515_93.400%,#212121_96.500%)]">
      <div className="h-[42px] shrink-0 bg-[#383838]" />
      <div className="flex h-[70px] shrink-0 items-center bg-[linear-gradient(90deg,#222_93.400%,#2a2a2a_96.500%)] text-[#c8c8c8]">
        <VscSplitHorizontal className="ml-[2429px] size-[32px]" />
        <span className="ml-[35px] flex gap-[6px]"><i className="size-[4px] rounded-full bg-[#c8c8c8]" /><i className="size-[4px] rounded-full bg-[#c8c8c8]" /><i className="size-[4px] rounded-full bg-[#c8c8c8]" /></span>
      </div>
      <div className="flex h-[48px] shrink-0 items-center text-[25px] text-[#a8a8a8]">
        <Wrench className="ml-[2406px] size-[29px]" strokeWidth={1.7} />
        <Fit w={95} className="ml-[14px]">duration</Fit>
      </div>
      <div className="flex min-h-0 grow justify-end">
        <svg className="h-[1240px] w-[168px]" viewBox="2392 208 168 1240">
          <path d="M2532.500 208V1448" stroke="#3c3c3c" strokeWidth="1.500" />
          {minimap.map(([y, t, w, c], i) => <text key={i} x="2393" y={y} textLength={w} lengthAdjust="spacingAndGlyphs" fill={c} className="font-mono text-[4.500px] font-bold">{t}</text>)}
          <path d="M2392 708h140v4h-140z" fill="#263e58" />
          {ruler.map(([a, b, c]) => <rect key={a} x="2533" width="9" y={a} height={b - a} fill={c} />)}
          <path d="M2533 894h27v4h-27z" fill="#999" />
        </svg>
      </div>
      <div className="flex h-[26px] shrink-0 overflow-hidden text-[#747474]">
        <div className="w-[96px] bg-[#272727]" />
        <div className="flex h-[26px] w-[552px] items-start bg-[#191919]">
          <svg className="mt-[-2px] ml-[15px] h-[18px] w-[11px]" viewBox="0 0 11 18" fill="none" stroke="#747474" strokeWidth="1.800"><path d="M1 1l8 8-8 8" /></svg>
          <Fit w={149} className="mt-[-11px] ml-[15px] text-[22px] leading-[34px] font-bold">NPM SCRIPTS</Fit>
        </div>
        <div className="flex w-[1912px] bg-[linear-gradient(90deg,#131313_85%,#212121_98%)]">
          <Fit w={40} className="mt-[14px] ml-[39px] font-mono text-[24px] leading-[28px]">119</Fit>
          <div className="ml-[53px] flex h-[26px] w-[90px] items-end justify-between">
            <i className="h-full w-[2px] bg-[#2e2e2e]" /><i className="h-full w-[2px] bg-[#2e2e2e]" /><i className="h-full w-[2px] bg-[#2e2e2e]" /><i className="h-4 w-[2px] bg-[#2e2e2e]" />
          </div>
          <span className="mt-[12px] ml-[28px] font-mono text-[24px] leading-[28px]">{"{"}</span>
        </div>
      </div>
      <div className="flex h-[44px] shrink-0 items-center border-b-2 border-[#4389bf] bg-[linear-gradient(90deg,transparent_88%,#2888d2_96%),linear-gradient(#1a5583,#1f72b3)] text-[24px] leading-[44px] text-[#bec3c8]">
        <VscSourceControl className="ml-[31px] size-[29px]" />
        <Fit w={49} className="ml-[5px]">dev*</Fit>
        <VscSync className="ml-[31px] size-[29px]" />
        <VscError className="ml-[32px] size-[29px]" />
        <span className="ml-[5px]">0</span>
        <VscWarning className="ml-[6px] size-[29px]" />
        <span className="ml-[4px]">0</span>
        <div className="ml-auto flex items-center pr-[29px]">
          <Fit w={149}>Ln 127, Col 22</Fit>
          <Fit w={105} className="ml-[33px]">Spaces: 2</Fit>
          <Fit w={69} className="ml-[32px]">UTF-8</Fit>
          <Fit w={26} className="ml-[33px]">LF</Fit>
          <Fit w={115} className="ml-[33px]">TypeScript</Fit>
          <Fit w={53} className="ml-[33px] text-[#d5dade]">3.9.4</Fit>
          <VscFeedback className="ml-[32px] size-[29px] text-white" />
          <VscBell className="ml-[31px] size-[29px] text-white" />
        </div>
      </div>
    </div>
  );
}

/* ------------------------------------------------------------------- dock */

const Ic = ({ children }: { children: React.ReactNode }) => <svg className="size-[60px]" viewBox="0 0 60 60">{children}</svg>;
const Badge = ({ n }: { n: string }) => (<><circle cx="48" cy="12" r="10.500" fill="#ee3f39" /><text x="48" y="17.500" textAnchor="middle" className="fill-white text-[15px]">{n}</text></>);
const Code = ({ alias = false }: { alias?: boolean }) => (
  <Ic><path d="M41 5l14 6v38l-14 6L6 22l5-4 30 23V19L11 42l-5-4z" fill="#2489ca" /><path d="M41 5l14 6v38l-14 6z" fill="#2fb0f2" />{alias && <path d="M4 57l5-6m-4 0h5v6" fill="none" stroke="#bbb" strokeWidth="1.800" />}</Ic>
);

const left: [React.ReactNode, boolean][] = [
  [<Ic><path d="M7 10q0-2 2-2h26q-4 12-6 24h6q-1 10 1 19H9q-2 0-2-2z" fill="#1f8df5" /><path d="M35 8h16q2 0 2 2v39q0 2-2 2H36q-2-8-1-19h-6q1-12 6-24z" fill="#e9eef5" /><path d="M20 19v5M40 19v5M17 37q13 10 27 0" fill="none" stroke="#15233c" strokeWidth="2.200" /></Ic>, true],
  [<Ic><circle cx="30" cy="30" r="24" fill="#a5adb0" stroke="#d0d5d7" strokeWidth="2" /><path d="M45 14q-13 0-21 13l-7 2-3 7 8-1 6 6-1 8 7-4 1-8q12-9 10-23zM18 39l-5 9 9-5z" fill="#40464a" /><circle cx="36" cy="24" r="4" fill="#a5adb0" /></Ic>, false],
  [<Ic><circle cx="30" cy="30" r="24" fill="#1f8cf0" stroke="#dfe6ea" strokeWidth="2.500" /><circle cx="30" cy="30" r="20" fill="none" stroke="#9fd4fa" strokeWidth="3" strokeDasharray="1 2" /><path d="M46 15L27 27l6 6z" fill="#ee3b34" /><path d="M15 46l12-19 6 6z" fill="#f3f3f3" /></Ic>, false],
  [<Ic><g transform="rotate(-6 30 30)"><path d="M11 6h36v48H11z" fill="#fff" stroke="#fff" strokeDasharray="3 2" strokeWidth="3" /><path d="M14 9h30v42H14z" fill="#4391dd" /><path d="M14 40q15-10 30 0v11H14z" fill="#a5cbe8" /><path d="M20 13l7 12 11 2-3 7 8 7-11-2-9-2-3-8z" fill="#5b3b22" /></g></Ic>, false],
  [<Ic><path d="M46 12h6l3 34-5 4z" fill="#4bb077" /><path d="M50 24l4 0 1 22-5 4z" fill="#e7a23c" /><path d="M8 8l37-4 5 46-36 5z" fill="#a2764a" /><circle cx="30" cy="27" r="11" fill="none" stroke="#7f5930" strokeWidth="2" /><circle cx="30" cy="23" r="4.500" fill="#7f5930" /><path d="M21 33q9-9 18 0-9 9-18 0z" fill="#7f5930" /></Ic>, false],
  [<Ic><path d="M10 10l37-4 6 44-39 5z" fill="#6f7880" /><path d="M7 12l36-6 5 42-37 5z" fill="#fff" /><path d="M6 11l37-6 1 13-37 5z" fill="#e4473f" /><text x="26" y="18" textAnchor="middle" transform="rotate(-6 26 18)" className="fill-white text-[9px]">JUIL.</text><text x="28" y="44" textAnchor="middle" className="fill-[#222] text-[25px]">7</text></Ic>, false],
  [<Ic><path d="M9 9l37-5 6 46-36 5z" fill="#fdfdf8" /><path d="M9 8l37-5 1 9-37 6z" fill="#f9c426" /><path d="M12 24l37-4M13 30l37-4M13 36l37-4M14 42l37-4M15 48l37-4" stroke="#dcdcdc" strokeWidth="1.200" /></Ic>, false],
  [<Ic><path d="M12 8l32-4q2 0 2 2l6 40q0 3-3 3l-31 5q-3 0-3-3L9 12q0-3 3-4z" fill="#f7f7f7" /><circle cx="18" cy="17" r="3.500" fill="#2b6df5" /><circle cx="19" cy="26" r="3.500" fill="#ee3b34" /><circle cx="20" cy="35" r="3.500" fill="#f49a2c" /><circle cx="21" cy="44" r="3.500" fill="#555a66" /><path d="M24 16l18-2M25 25l18-2M26 34l18-2M27 43l18-2" stroke="#bbb" /></Ic>, false],
  [<Ic><path d="M6 12l38-5 6 40-36 6z" fill="#e9ece6" /><path d="M22 9l22-2 4 26q-18-6-26-24z" fill="#8fd06b" /><path d="M7 23l12-2 4 31-9 1z" fill="#f4b63c" /><path d="M12 12l24 34" stroke="#f39aa6" strokeWidth="5" /><circle cx="21" cy="34" r="6" fill="#1e74e8" /><path d="M21 30l3 7h-6z" fill="#fff" /><circle cx="45" cy="40" r="12" fill="#f3f4f5" /><circle cx="45" cy="40" r="8.500" fill="none" stroke="#7a93a8" /><text x="45" y="43.500" textAnchor="middle" className="fill-[#51606c] text-[9px]">3D</text></Ic>, false],
  [<Ic><path d="M30 3l26 24-20 30L4 30z" fill="#2b86c8" /><path d="M6 14l14-1 8 12-14 6zM44 6l6 8-4 14-10-2z" fill="#eea42c" /><circle cx="30" cy="30" r="16" fill="#7f9cb5" fillOpacity="0.800" stroke="#fff" strokeWidth="5" /><path d="M20 18l20 24" stroke="#fff" strokeWidth="5" /></Ic>, false],
  [<Ic><circle cx="30" cy="30" r="25" fill="#f2f2f2" />{["#f59c1f", "#f2d22e", "#9fce3f", "#52b987", "#5aa4e0", "#8a76d0", "#d465a6", "#ee4f3e"].map((c, i) => <ellipse key={c} cx="30" cy="18.500" rx="6.500" ry="10" fill={c} fillOpacity="0.850" transform={`rotate(${i * 45} 30 30)`} />)}</Ic>, false],
  [<Ic><rect x="5" y="9" width="44" height="39" rx="8" fill="#35d65b" /><rect x="12" y="19" width="20" height="19" rx="4" fill="#fff" /><path d="M34 26l8-6v18l-8-6z" fill="#fff" /><circle cx="42" cy="39" r="12.500" fill="#f1f1f1" /><path d="M37 33q0 12 11 13l1-4-4-2-2 2q-3-2-3-5l2-1-2-4z" fill="#37c95a" /></Ic>, false],
  [<Ic><path d="M10 14q3 3 5 4 6-6 12-5l-1 5q5-1 9-15 6 4 5 9 4-1 6-4 9 10 9 24-1 22-25 23Q6 54 5 32q0-9 5-18z" fill="#ff7a1a" /><path d="M38 4q8 8 7 14 8 6 8 16-2 18-22 20 16-6 14-22-2-10-12-12z" fill="#ffd43a" /><path d="M5 32q0 22 25 23 20-1 24-20-6 14-22 13Q10 46 5 32z" fill="#f52f6c" /><circle cx="31" cy="31" r="10" fill="#7a45dc" /></Ic>, true],
  [<Ic><rect x="8" y="9" width="43" height="42" rx="2" fill="#fbfbfb" />{["#ea4335", "#ea4335", "#ea4335", "#3aa757", "#4285f4", "#fbbc05", "#3aa757", "#fbbc05", "#fbbc05"].map((c, i) => <rect key={i} x={19 + (i % 3) * 8} y={19 + Math.floor(i / 3) * 8} width="6" height="6" fill={c} />)}</Ic>, false],
  [<Ic><path d="M30 8q24 1 24 20T30 48q-6 0-10-2-4 4-10 4 3-4 2-8-6-6-6-14Q8 9 30 8z" fill="#2d9df5" /><circle cx="39" cy="40" r="14.500" fill="#eef6fc" /><path d="M44 52l5 4-1-8z" fill="#eef6fc" /><circle cx="32" cy="39.500" r="2.300" fill="#1c4f86" /><circle cx="39" cy="39.500" r="2.300" fill="#1c4f86" /><circle cx="46" cy="39.500" r="2.300" fill="#1c4f86" /></Ic>, false],
  [<Ic><rect x="6" y="8" width="48" height="43" rx="3" fill="#1f1f1f" stroke="#6d767c" strokeWidth="1.500" /><path d="M12 16l6 3.500-6 3.500M19 24h7" fill="none" stroke="#fff" strokeWidth="2" /></Ic>, true],
  [<Code alias />, false],
  [<Code />, true],
  [<Ic><circle cx="30" cy="30" r="24.500" fill="#eef0f3" /><path d="M26 42V21l15-4v21" fill="none" stroke="#f0527a" strokeWidth="3" /><path d="M26 19l15-4v6l-15 4z" fill="#f0527a" /><ellipse cx="22" cy="42" rx="5" ry="4" fill="#a457f0" /><ellipse cx="37" cy="38" rx="5" ry="4" fill="#3c9cf5" /></Ic>, false],
  [<Ic><circle cx="30" cy="30" r="24.500" fill="#a93ed8" /><g fill="none" stroke="#fff" strokeWidth="3"><path d="M20 43a16 16 0 1 1 20 0" /><path d="M24 35a9 9 0 1 1 12 0" /></g><circle cx="30" cy="29" r="4" fill="#fff" /><path d="M26 36q4-3 8 0l-2 12h-4z" fill="#fff" /></Ic>, false],
  [<Ic><circle cx="30" cy="30" r="24" fill="#0d0d0d" /><FaApple x="12" y="21" width="17" height="17" color="#fff" /><text x="28" y="36" className="fill-white text-[18px] font-medium">tv</text></Ic>, false],
  [<Ic><circle cx="30" cy="30" r="24" fill="#f28a1d" /><path d="M6.500 35a24 24 0 0 0 47 0z" fill="#e2601a" /><path d="M15 20q8-4 14 1v21q-7-4-14 0zM45 20q-8-4-14 1v21q7-4 14 0z" fill="#f6f1ea" /></Ic>, false],
  [<Ic><circle cx="30" cy="30" r="24.500" fill="#1c84f4" /><path d="M6 28a24.500 24.500 0 0 1 48 0z" fill="#2ba8f7" /><path d="M32 15L19 40M28 15l14 26M14 34h32" stroke="#fff" strokeWidth="4" strokeLinecap="round" /></Ic>, false],
  [<Ic><circle cx="30" cy="30" r="23.500" fill="#4db57d" stroke="#e8efe9" strokeWidth="2.500" /><g fill="none" stroke="#d8f5dc" strokeWidth="1.600"><ellipse cx="30" cy="30" rx="16" ry="6" transform="rotate(15 30 30)" /><ellipse cx="30" cy="30" rx="16" ry="6" transform="rotate(75 30 30)" /><ellipse cx="30" cy="30" rx="16" ry="6" transform="rotate(135 30 30)" /></g><circle cx="30" cy="30" r="2.500" fill="#fff" /></Ic>, false],
  [<Ic><rect x="6" y="7" width="48" height="46" rx="3" fill="#9ea7a9" /><circle cx="30" cy="30" r="18" fill="#222" stroke="#33383a" strokeWidth="3" strokeDasharray="2 2" /><circle cx="30" cy="30" r="14" fill="none" stroke="#9ba1a3" strokeWidth="3.500" /><path d="M30 30L17 25M30 30l13-6M30 30v14" stroke="#9ba1a3" strokeWidth="4" /><Badge n="1" /></Ic>, false],
  [<Ic><path d="M18 20q1-11 12-11t12 11q0 7-7 12-5 4-5 12" fill="none" stroke="#a3a8ae" strokeWidth="3.500" /><circle cx="30" cy="49" r="2.800" fill="#a3a8ae" /></Ic>, false],
  [<Ic><circle cx="30" cy="30" r="25" fill="#1c3353" /><path d="M10 48Q-4 28 12 9M50 12q14 19-2 38" fill="none" stroke="#f3f5f7" strokeWidth="2.500" /><path d="M7 14l11-7-2 12zM53 46l-9 8v-12z" fill="#fff" /><text x="21" y="40" className="fill-white text-[28px] font-bold">B<tspan className="fill-[#2aa7df]">.</tspan></text></Ic>, false],
];

const right: [React.ReactNode, boolean][] = [
  [<Ic><circle cx="34" cy="15" r="7.500" fill="#7b83eb" /><circle cx="48" cy="18" r="5" fill="#5059c9" /><path d="M40 25h15v17q0 8-8 8h-4z" fill="#5059c9" /><path d="M22 25h25v15q0 11-12 11-10 0-13-10z" fill="#7b83eb" /><rect x="6" y="19" width="26" height="25" rx="2" fill="#4b53bc" /><path d="M13 25h12M19 25v14" stroke="#fff" strokeWidth="3" /></Ic>, true],
  [<Ic><path d="M34 28l7-11L30 5 18 17l24 21v12" fill="none" stroke="#57b849" strokeWidth="5.500" /><path d="M17 40l14 16 8-6" fill="none" stroke="#22332f" strokeWidth="4" /></Ic>, true],
  [<Ic><circle cx="21" cy="21" r="13" fill="#1d9cea" /><circle cx="38" cy="40" r="13" fill="#1d86dc" /><circle cx="30" cy="30" r="20" fill="#2196e8" /><text x="30" y="41" textAnchor="middle" className="fill-white text-[31px] font-bold">S</text><Badge n="2" /></Ic>, true],
  [<Ic><path d="M8 3h30l15 17v36H8z" fill="#f6f6f6" stroke="#bbb" strokeWidth="1" /><path d="M38 3h15v17z" fill="#5d5f60" /></Ic>, true],
  [<Ic><rect x="4" y="3" width="52" height="51" fill="#d20f14" /><path d="M4 30h52v24H4z" fill="#a80b10" /><path d="M14 43Q30 28 30 15q-3-5-3 2 3 15 18 20 4-4-5-4-14 1-26 10z" fill="none" stroke="#fff" strokeWidth="2.200" /></Ic>, true],
  [<Ic><path d="M6 56l7-13h34l7 13z" fill="#f58a17" /><path d="M27 3h6l12 44q-15 8-30 0z" fill="#f47d12" /><path d="M24 14h12l3 10q-9 4-18 0zM19 33h22l3 9q-14 6-28 0z" fill="#d9dfe3" /></Ic>, true],
  [<Ic><path d="M4 50q14-10 50-6-6 14-24 10-10 6-26-4z" fill="#e99217" /><path d="M7 8h34v36q-17 8-34 0z" fill="#c9cbc9" /><ellipse cx="24" cy="9" rx="17" ry="4.500" fill="#f0a535" /><path d="M9 18h14v16H9z" fill="#f2cf66" /><path d="M58 3Q40 14 36 34l6 5Q58 22 58 3z" fill="#1d48a8" /><path d="M35 34l8 6-8 12-8-3z" fill="#2a2a2a" /></Ic>, true],
  [<Ic><ellipse cx="30" cy="30" rx="26" ry="26" fill="#62b72c" stroke="#e6efe0" strokeWidth="2" /><path d="M14 20l5 24q2 8 10 6 6-2 4-10l-4-22M33 40q10 3 12-2l-6-24" fill="none" stroke="#fff" strokeWidth="6" /></Ic>, true],
  [<Ic><circle cx="30" cy="30" r="24.500" fill="#c4222e" /><path d="M12 23h15l-1 14H13M14 30h12M27 23l8 14 9-21" fill="none" stroke="#fff" strokeWidth="4.500" /><circle cx="46" cy="46" r="8" fill="#50ae63" stroke="#dfe8e0" strokeWidth="1.500" /><path d="M42 46l3 3.500 5-6" fill="none" stroke="#fff" strokeWidth="2" /></Ic>, true],
  [<Ic><circle cx="30" cy="30" r="25" fill="#d9493c" /><path d="M30 30L8.500 18A25 25 0 0 0 28 55l10-20z" fill="#2f9e57" /><path d="M30 20h23q7 22-12 33-6 3-13 2l11-19z" fill="#fbcd49" /><circle cx="30" cy="30" r="12" fill="#f3f4f5" /><circle cx="30" cy="30" r="9.300" fill="#4a86ee" /></Ic>, true],
  [<Ic><rect x="11" y="9" width="40" height="30" fill="#a98d61" /><g transform="rotate(-6 28 30)"><rect x="6" y="12" width="44" height="36" fill="#fff" /><path d="M8 14h40v20H8z" fill="#4b93d8" /><path d="M8 30q20-6 40 0v5H8z" fill="#e2ecf2" /><path d="M8 36q20-4 40 2v8H8z" fill="#7a8f98" /></g><circle cx="45" cy="39" r="10" fill="#5b5a58" fillOpacity="0.700" stroke="#cfcfcf" strokeWidth="3" /><path d="M38 47h14v8q-7 4-14 0z" fill="#857a6c" /></Ic>, true],
];

const Slot = ({ icon, open }: { icon: React.ReactNode; open: boolean }) => (
  <div className="flex w-[60.200px] shrink-0 flex-col items-center">
    {icon}
    <span className={"mt-[2px] h-[6px] w-[6px] rounded-full " + (open ? "bg-[#99a2ae]" : "bg-transparent")} />
  </div>
);

function Dock() {
  return (
    <div className="absolute bottom-0 left-[43px] flex h-[78px] w-[2474px] items-start overflow-hidden rounded-t-[12px] border-x-2 border-t-2 border-[#3a4452] bg-gradient-to-r from-[#121824] via-[#141f2f] to-[#101b27] pt-[4px] pl-[2px]">
      {left.map(([icon, open], i) => <Slot key={i} icon={icon} open={open} />)}
      <span className="mt-[4px] ml-[14px] h-[58px] w-[2px] bg-[#4b5563]" />
      <span className="w-[12px]" />
      {right.map(([icon, open], i) => <Slot key={i} icon={icon} open={open} />)}
      <span className="mt-[4px] ml-[13px] h-[58px] w-[2px] bg-[#4b5563]" />
      <span className="w-[13px]" />
      <Slot open={false} icon={<Ic><path d="M14 3h30v20H14z" fill="#f1f1f1" /><path d="M10 8h41v14H10z" fill="#fafafa" /><path d="M7 20h47v26H7z" fill="#eceff0" /><path d="M7 20h47v5H7z" fill="#76a5b8" /><path d="M9 46h43v3H9z" fill="#ccc" /><path d="M12 30h18M34 30h14M12 36h14M30 34h16M12 41h34" stroke="#d7a8a4" /></Ic>} />
      <Slot open={false} icon={<Ic><path d="M11 11h39l-5 40q-14 6-29 0z" fill="#5c6164" /><path d="M16 16l3 34M44 16l-4 35" stroke="#7e8386" strokeWidth="3" /><path d="M13 30h33l-1 8H14z" fill="#73787b" /><path d="M11 9l8-6 5 5 6-5 6 5 6-4 8 7-6 5H17z" fill="#e8e8e8" /><path d="M20 8l5 6M34 7l-3 6M43 8l-4 6" stroke="#5a5a5a" strokeWidth="2" /></Ic>} />
    </div>
  );
}

export default function App() {
  return (
    <div className="relative h-[1600px] w-[2560px] overflow-hidden bg-gradient-to-b from-[#0b1a33] via-[#04090f] to-[#06111f] font-['Inter',sans-serif]">
      <MenuBar />
      <EditorWindow />
      <ChromeWindow />
      <Dock />
    </div>
  );
}
